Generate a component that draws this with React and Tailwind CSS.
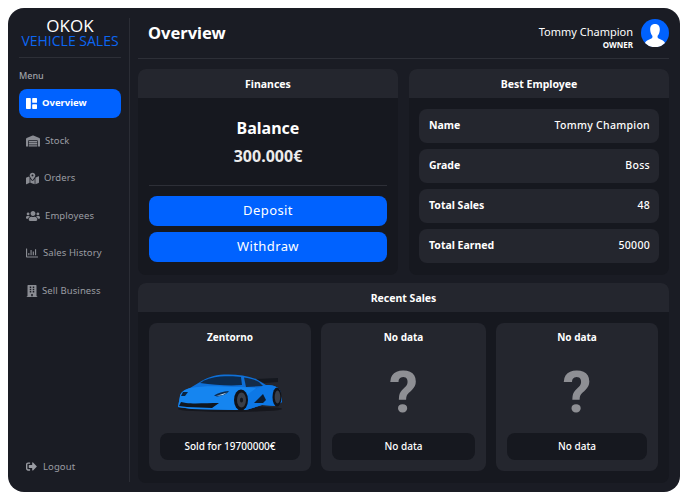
import { BsGrid1X2Fill } from "react-icons/bs";
import { FaWarehouse, FaMapMarkedAlt, FaUsers, FaRegChartBar, FaBuilding, FaSignOutAlt } from "react-icons/fa";

const font = { fontFamily: '"Noto Sans", "Open Sans", sans-serif' };

const menu = [
  { label: "Stock", icon: FaWarehouse, size: 14, gap: "gap-[5px]" },
  { label: "Orders", icon: FaMapMarkedAlt, size: 13, gap: "gap-[5px]" },
  { label: "Employees", icon: FaUsers, size: 14, gap: "gap-[5px]" },
  { label: "Sales History", icon: FaRegChartBar, size: 12, gap: "gap-[5px]" },
  { label: "Sell Business", icon: FaBuilding, size: 12, gap: "gap-[4px]" },
];

const stats = [
  ["Name", "Tommy Champion"],
  ["Grade", "Boss"],
  ["Total Sales", "48"],
  ["Total Earned", "50000"],
];

function Car() {
  return (
    <svg viewBox="0 0 116 52" className="h-[52px] w-[116px]">
      <ellipse cx="58" cy="43" rx="52" ry="3" fill="#0d0e13" opacity="0.6" />
      <path d="M84 13 L106 12 L106 16 L92 17Z" fill="#15181f" />
      <path d="M6 41 L8 30 C9 26 12 24 18 22 L28 16 C34 12 42 9 52 8.5 C62 8 74 9 84 13 L94 19 C100 19 105 20 108 24 L110 36 L104 40 L90 39 L74 44 L62 44 L20 43Z" fill="#0f70d8" />
      <path d="M8 30 C9 26 12 24 18 22 C30 20 44 20 62 21 C70 21 76 21 84 22 L72 36 L74 44 L62 44 L20 43 L6 41Z" fill="#1585f0" />
      <path d="M94 19 C100 19 105 20 108 24 L110 36 L104 40 L90 39 L74 44 L72 34 C76 26 84 22 94 19Z" fill="#0d78e6" />
      <path d="M28 17 C34 13 41 11 48 10.5 C56 10 64 10 69 11 L70 19 C58 20 42 19 28 17Z" fill="#0d2a4c" />
      <path d="M72 11.5 C78 12 83 14 87 16 L91 20 L74 21Z" fill="#142c48" />
      <path d="M42 29.5 C46 27 51 25.5 57 25 C55 28 50 30 45 30.5Z" fill="#0a2b50" />
      <path d="M44 30 L55 26.5 L51 29Z" fill="#b9dcf8" />
      <path d="M9 36 L14 37 C22 38 36 37 47 37 L40 42 L15 41 L7 40Z" fill="#10161f" />
      <path d="M11 26 L16 26 L13 30 L9 30Z" fill="#0a2340" />
      <path d="M82 37 L91 28 L94 34 L91 37Z" fill="#0c1c30" />
      <ellipse cx="69" cy="34" rx="7" ry="10.5" fill="#101218" />
      <ellipse cx="69.5" cy="34" rx="4.5" ry="7.5" fill="#3a3f49" />
      <ellipse cx="69.5" cy="34" rx="1.6" ry="2.6" fill="#15171d" />
      <ellipse cx="105" cy="31" rx="4.5" ry="9.5" fill="#101218" />
      <ellipse cx="105.5" cy="31" rx="2.8" ry="6.5" fill="#3a3f49" />
    </svg>
  );
}

function Unknown() {
  return <span style={{ fontFamily: "Roboto, sans-serif" }} className="text-[58px] font-bold leading-none text-[#8e8f94]">?</span>;
}

function SaleCard({ title, footer, children, width }) {
  return (
    <div className={`flex h-[148px] flex-col rounded-lg bg-[#24262e] ${width}`}>
      <div className="flex h-[28px] shrink-0 items-center justify-center text-[10px] font-bold text-white">{title}</div>
      <div className="flex flex-1 items-center justify-center">{children}</div>
      <div className="mx-[11px] mb-[11px] flex h-[27px] items-center justify-center rounded-lg bg-[#16181f] text-[10px] font-medium text-white">
        {footer}
      </div>
    </div>
  );
}

export default function App() {
  return (
    <div style={font} className="h-[500px] w-[688px] bg-white p-2">
      <div className="flex h-[484px] w-[672px] rounded-[16px] bg-[#1a1c24] pl-[11px]">
        <aside className="my-[10px] flex w-[111px] shrink-0 flex-col border-r border-[#2b2d35] pr-2">
          <div className="border-b border-[#2d2f37] pb-[9px] text-center" style={{ fontFamily: '"Open Sans", sans-serif' }}>
            <p className="text-[17px] leading-[16px] text-white">OKOK</p>
            <p className="text-[14px] font-medium leading-[14px] text-[#0c66f2]">VEHICLE SALES</p>
          </div>
          <p className="mt-[12px] text-[9px] font-medium leading-[12px] text-[#a0a2a8]">Menu</p>
          <div className="mt-[7px] flex h-[29px] items-center gap-[5px] rounded-lg bg-[#0062ff] pl-[7px] text-[9.5px] font-bold text-white">
            <BsGrid1X2Fill size={11} />
            Overview
          </div>
          <nav className="mt-[4px] flex flex-col">
            {menu.map(({ label, icon: Icon, size, gap }) => (
              <div key={label} className={`flex h-[37.5px] items-center ${gap} pl-[7px] text-[9.5px] tracking-[0.1px] text-[#9a9ca3]`}>
                <Icon size={size} className="text-[#8a8c93]" />
                {label}
              </div>
            ))}
          </nav>
          <div className="mt-auto mb-[8px] flex items-center gap-[6px] pl-[7px] text-[9.5px] tracking-[0.1px] text-[#9a9ca3]">
            <FaSignOutAlt size={11} />
            Logout
          </div>
        </aside>

        <main className="flex min-w-0 flex-1 flex-col pt-[10px] pr-[11px] pl-[8px]">
          <header className="flex h-[41px] shrink-0 items-center justify-between border-b border-[#2d2f37] pb-[11px] pl-[10px]">
            <h1 className="pt-[1px] text-[16.5px] font-bold text-white">Overview</h1>
            <div className="flex items-center gap-[8px]">
              <div className="mt-[10px] text-right">
                <p className="text-[11px] leading-[14px] text-white">Tommy Champion</p>
                <p className="text-[8px] font-bold leading-[12px] text-white">OWNER</p>
              </div>
              <svg viewBox="0 0 28 28" className="h-[28px] w-[28px]">
                <circle cx="14" cy="14" r="14" fill="#0062ff" />
                <path d="M14 5 C17.5 5 19 7.5 18.8 11 C18.6 14 17.5 16 16.5 17 L16.8 19 C19 20.5 23 21 24 24 A14 14 0 0 1 4 24 C5 21 9 20.5 11.2 19 L11.5 17 C10.5 16 9.4 14 9.2 11 C9 7.5 10.5 5 14 5Z" fill="#fff" />
              </svg>
            </div>
          </header>

          <div className="mt-[10px] flex gap-[11px]">
            <section className="h-[206px] w-[260px] overflow-hidden rounded-lg bg-[#16181f]">
              <div className="flex h-[29px] items-center justify-center bg-[#24262e] pt-[2px] text-[10.5px] font-bold text-white">Finances</div>
              <div className="px-[11px]">
                <div className="flex h-[88px] flex-col items-center justify-center border-b border-[#2d2f37]">
                  <p className="text-[16px] font-bold leading-[28px] text-white">Balance</p>
                  <p className="text-[16px] font-bold leading-[28px] text-[#ececec]">300.000€</p>
                </div>
                <button className="mt-[10px] flex h-[30px] w-full items-center justify-center rounded-lg bg-[#0062ff] text-[13px] tracking-[0.4px] text-white">Deposit</button>
                <button className="mt-[6px] flex h-[30px] w-full items-center justify-center rounded-lg bg-[#0062ff] text-[13px] tracking-[0.4px] text-white">Withdraw</button>
              </div>
            </section>

            <section className="h-[206px] w-[260px] overflow-hidden rounded-lg bg-[#16181f]">
              <div className="flex h-[29px] items-center justify-center bg-[#24262e] pt-[2px] text-[10.5px] font-bold text-white">Best Employee</div>
              <div className="flex flex-col gap-[6px] px-[10px] pt-[11px]">
                {stats.map(([k, v]) => (
                  <div key={k} className="flex h-[34px] items-center justify-between rounded-lg bg-[#24262e] pr-[9px] pl-[10px] text-[10.5px] text-white">
                    <span className="font-bold">{k}</span>
                    <span className="font-medium tracking-[0.3px]">{v}</span>
                  </div>
                ))}
              </div>
            </section>
          </div>

          <section className="mt-[8px] h-[200px] overflow-hidden rounded-lg bg-[#16181f]">
            <div className="flex h-[29px] items-center justify-center bg-[#24262e] pt-[2px] text-[10.5px] font-bold text-white">Recent Sales</div>
            <div className="flex gap-[10px] px-[11px] pt-[11px]">
              <SaleCard title="Zentorno" footer="Sold for 19700000€" width="w-[162px]"><Car /></SaleCard>
              <SaleCard title="No data" footer="No data" width="w-[165px]"><Unknown /></SaleCard>
              <SaleCard title="No data" footer="No data" width="w-[162px]"><Unknown /></SaleCard>
            </div>
          </section>
        </main>
      </div>
    </div>
  );
}
